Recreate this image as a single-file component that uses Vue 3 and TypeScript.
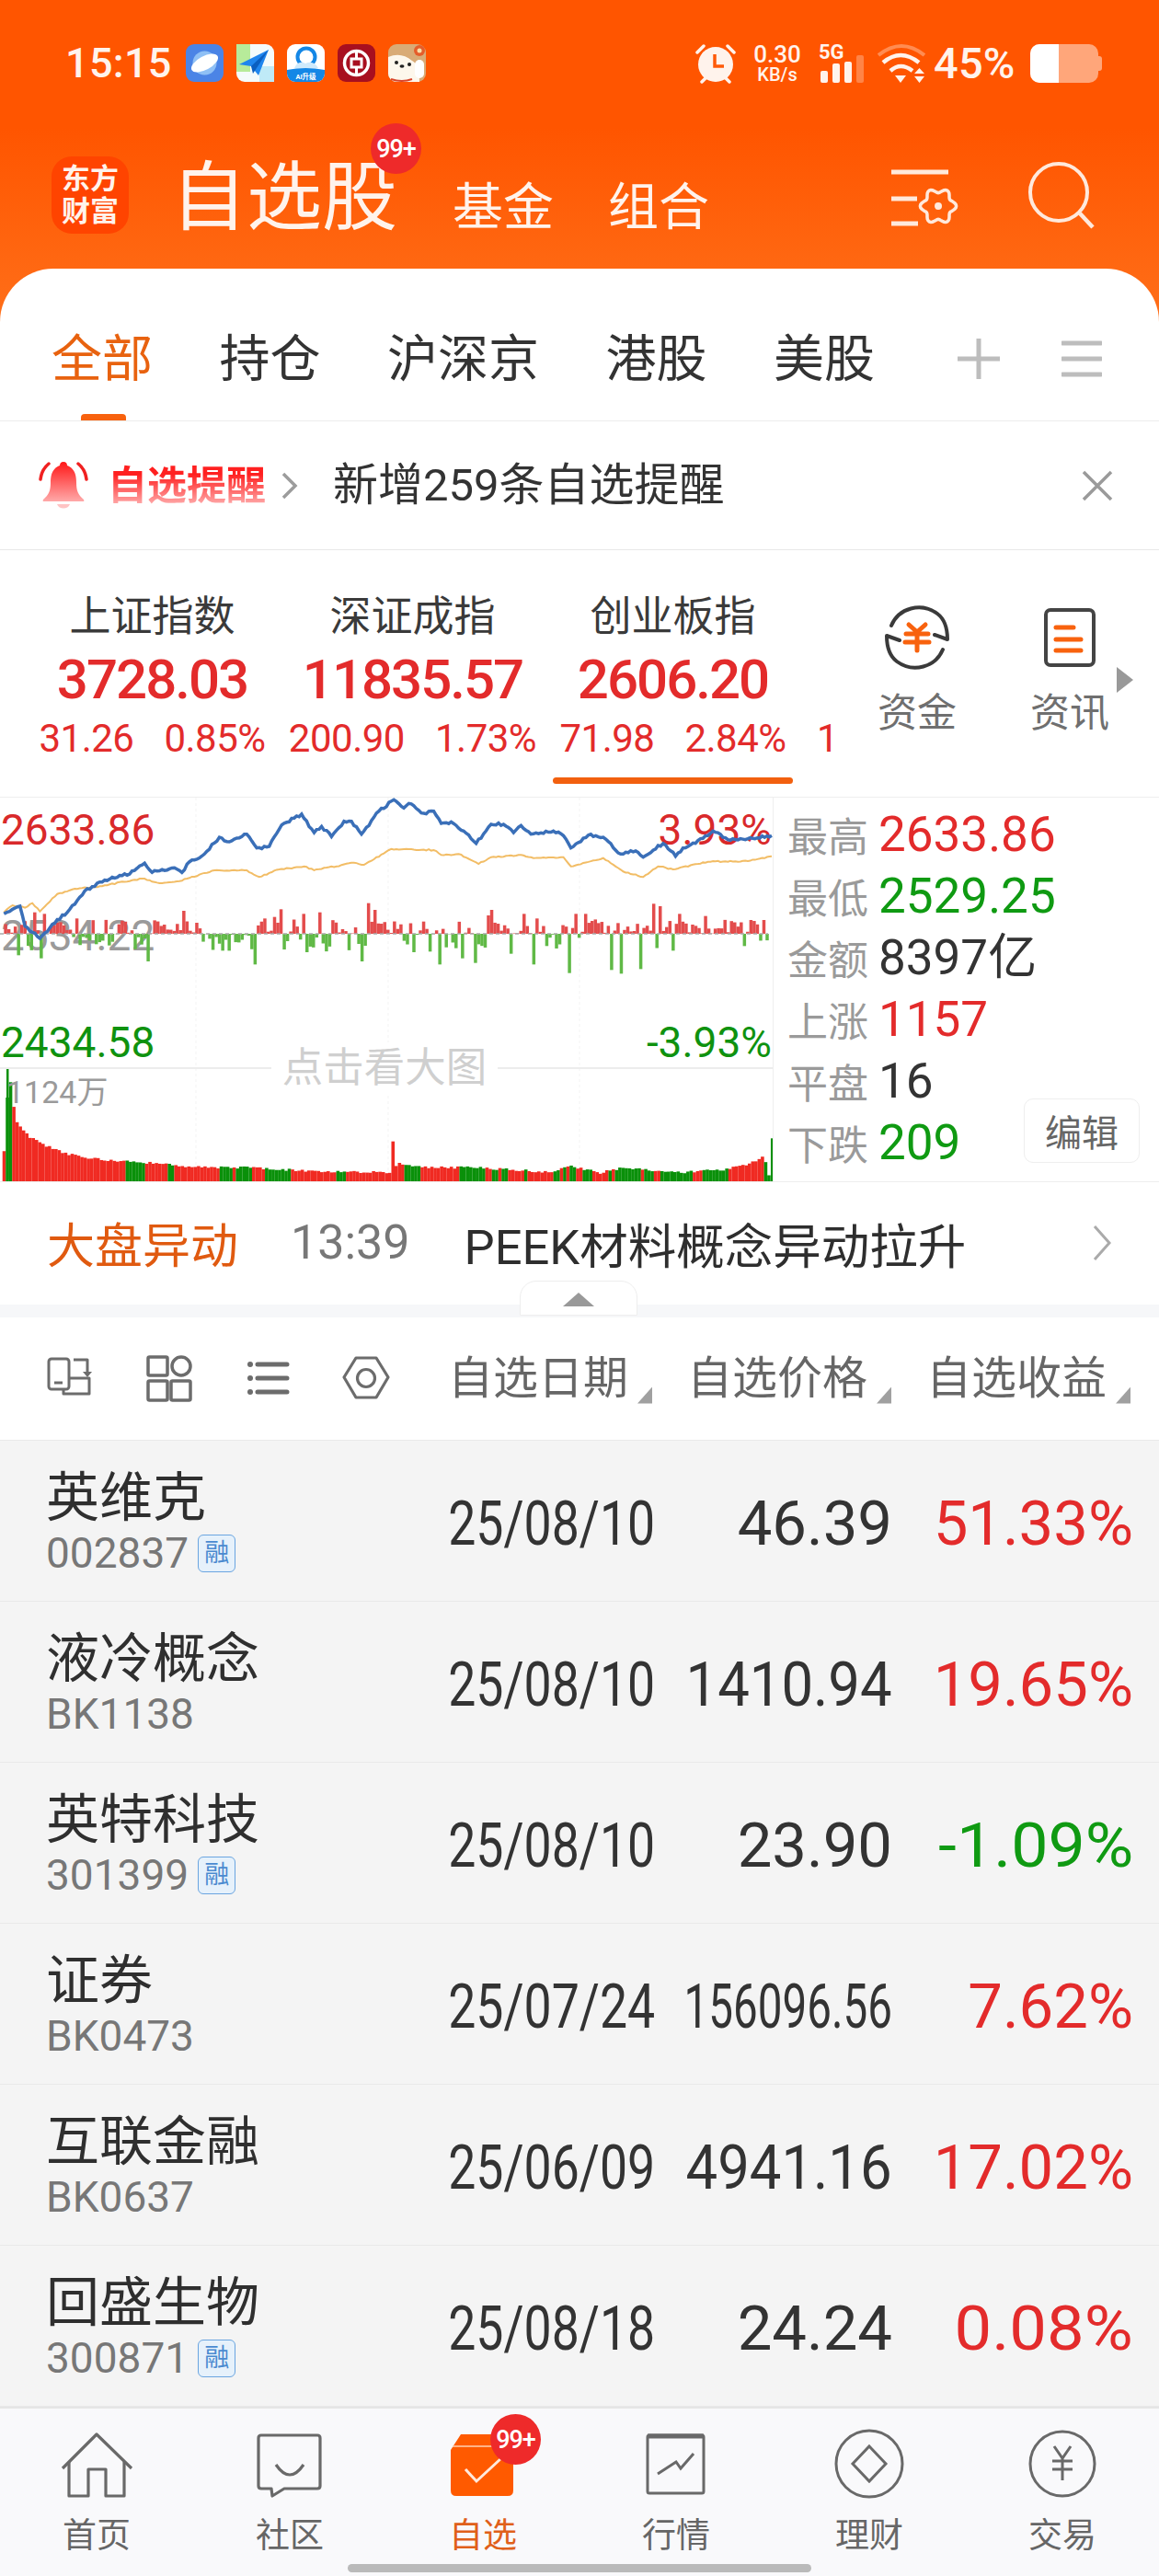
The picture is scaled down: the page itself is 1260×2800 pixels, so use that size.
<script setup lang="ts">
const tabs = ['全部', '持仓', '沪深京', '港股', '美股']

const indices = [
  { name: '上证指数', value: '3728.03', diff: '31.26', pct: '0.85%', active: false },
  { name: '深证成指', value: '11835.57', diff: '200.90', pct: '1.73%', active: false },
  { name: '创业板指', value: '2606.20', diff: '71.98', pct: '2.84%', active: true },
]

const stats = [
  { label: '最高', value: '2633.86', tone: 'up' },
  { label: '最低', value: '2529.25', tone: 'down' },
  { label: '金额', value: '8397亿', tone: '' },
  { label: '上涨', value: '1157', tone: 'up' },
  { label: '平盘', value: '16', tone: '' },
  { label: '下跌', value: '209', tone: 'down' },
]

const stocks = [
  { name: '英维克', code: '002837', margin: true, date: '25/08/10', price: '46.39', priceFit: 1, gain: '51.33%', tone: 'up', gainFit: 1 },
  { name: '液冷概念', code: 'BK1138', margin: false, date: '25/08/10', price: '1410.94', priceFit: 0.92, gain: '19.65%', tone: 'up', gainFit: 1 },
  { name: '英特科技', code: '301399', margin: true, date: '25/08/10', price: '23.90', priceFit: 1, gain: '-1.09%', tone: 'down', gainFit: 1.07 },
  { name: '证券', code: 'BK0473', margin: false, date: '25/07/24', price: '156096.56', priceFit: 0.71, gain: '7.62%', tone: 'up', gainFit: 1 },
  { name: '互联金融', code: 'BK0637', margin: false, date: '25/06/09', price: '4941.16', priceFit: 0.92, gain: '17.02%', tone: 'up', gainFit: 1 },
  { name: '回盛生物', code: '300871', margin: true, date: '25/08/18', price: '24.24', priceFit: 1, gain: '0.08%', tone: 'up', gainFit: 1.08 },
]

const sortHeads = ['自选日期', '自选价格', '自选收益']

const navItems = [
  { key: 'home', label: '首页' },
  { key: 'social', label: '社区' },
  { key: 'watch', label: '自选' },
  { key: 'quote', label: '行情' },
  { key: 'wealth', label: '理财' },
  { key: 'trade', label: '交易' },
]

// chart traced in reference pixels: x scaled, y thirds
const sx = (z: number) => z / 1.845
const sy = (z: number) => z / 3 - 7

let seed = 20250818
const rnd = () => {
  seed = (seed * 1664525 + 1013904223) % 4294967296
  return seed / 4294967296
}

const blueKeys = [[8,400],[25,385],[40,375],[50,440],[80,480],[110,430],[140,385],[170,325],[210,290],[260,270],[290,235],[305,265],[350,250],[365,265],[380,230],[410,205],[440,150],[460,165],[495,140],[515,185],[540,180],[565,110],[605,75],[630,135],[645,115],[665,148],[690,98],[705,98],[725,140],[760,65],[790,28],[810,55],[820,40],[850,72],[870,65],[885,105],[905,100],[930,130],[955,170],[985,108],[1010,108],[1030,135],[1045,112],[1065,140],[1110,130],[1130,145],[1145,185],[1180,143],[1210,150],[1245,205],[1275,195],[1290,215],[1330,170],[1355,212],[1370,185],[1395,170],[1430,130],[1465,160],[1500,155],[1548,145]]
const amberKeys = [[8,395],[25,372],[50,380],[65,365],[80,392],[115,335],[150,318],[200,310],[285,285],[320,300],[360,293],[430,258],[495,258],[520,280],[560,255],[610,245],[630,258],[710,233],[730,240],[785,188],[870,192],[885,208],[920,205],[960,237],[985,215],[1045,208],[1070,218],[1130,215],[1145,245],[1210,218],[1250,262],[1290,280],[1320,245],[1350,255],[1420,230],[1500,228],[1548,212]]

const tracePath = (keys: number[][], noise: number) => {
  let d = ''
  keys.forEach((p, i) => {
    if (i === 0) {
      d = `M${sx(p[0]).toFixed(1)} ${sy(p[1]).toFixed(1)}`
      return
    }
    const prev = keys[i - 1]
    const steps = Math.max(1, Math.round((p[0] - prev[0]) / 5))
    for (let s = 1; s <= steps; s++) {
      const t = s / steps
      const y = prev[1] + (p[1] - prev[1]) * t + (s < steps ? (rnd() - 0.5) * noise : 0)
      d += `L${sx(prev[0] + (p[0] - prev[0]) * t).toFixed(1)} ${sy(y).toFixed(1)}`
    }
  })
  return d
}
const bluePath = tracePath(blueKeys, 9)
const amberPath = tracePath(amberKeys, 4)

const redPeaks: Record<number, number> = { 368: 75, 735: 100, 746: 78, 560: 80, 605: 65, 640: 70, 975: 60, 985: 78, 1045: 65, 1150: 65, 1172: 65, 1305: 98, 1318: 90, 1362: 65, 1410: 58, 1500: 45, 1530: 45, 65: 70, 85: 65, 150: 50, 525: 50, 548: 55, 1075: 50, 1235: 35 }
const greenPeaks: Record<number, number> = { 297: 90, 445: 55, 510: 100, 720: 90, 830: 60, 880: 100, 925: 80, 950: 95, 1068: 100, 1138: 128, 1222: 118, 1243: 130, 1280: 115, 1020: 65, 615: 60, 1350: 55, 1490: 40, 80: 80, 35: 70 }

const flowBars: { x: number; y: number; h: number; up: boolean }[] = []
let flowUp = true
for (let z = 8; z < 1540; z += 6.5) {
  const near = (peaks: Record<number, number>) => Object.keys(peaks).find((k) => Math.abs(Number(k) - z) < 3.3)
  const r = near(redPeaks)
  const g = near(greenPeaks)
  if (rnd() > 0.65) flowUp = rnd() > 0.45
  let up = flowUp
  let h = up ? 8 + rnd() * 40 : 10 + rnd() * 48
  if (rnd() > 0.8) h = rnd() * 8
  if (r) { up = true; h = redPeaks[Number(r)] }
  else if (g) { up = false; h = greenPeaks[Number(g)] }
  flowBars.push({ x: sx(z), y: up ? sy(465 - h) : sy(465), h: h / 3, up })
}

const volumeEnv = [[5,95],[15,365],[22,260],[30,195],[40,170],[60,140],[90,115],[130,90],[200,70],[300,60],[400,45],[500,45],[600,35],[700,30],[780,30],[795,60],[850,45],[950,45],[1100,30],[1140,50],[1200,28],[1250,45],[1350,28],[1450,38],[1500,55],[1530,85],[1540,8]]
const volumeBars: { x: number; y: number; h: number; up: boolean }[] = []
let runUp = true
for (let z = 5; z < 1541; z += 6.5) {
  const next = volumeEnv.findIndex((p) => p[0] >= z)
  const b = volumeEnv[Math.max(next, 1)]
  const a = volumeEnv[Math.max(next, 1) - 1]
  let h = a[1] + ((b[1] - a[1]) * (z - a[0])) / (b[0] - a[0]) + (rnd() - 0.5) * 8
  if (rnd() > 0.6) runUp = rnd() < (z < 440 ? 0.72 : 0.5)
  let up = runUp
  if (z > 10 && z < 20) up = false
  if (Math.abs(z - 785) < 3.3) { h = 130; up = true }
  volumeBars.push({ x: sx(z), y: sy(1272 - h), h: h / 3, up })
}
volumeBars.push({ x: sx(1546), y: sy(1132), h: 140 / 3, up: false })

// six lobed gear outline for the settings icon
const gearPath = Array.from({ length: 73 }, (_, i) => {
  const a = (i / 72) * Math.PI * 2
  const r = 17 + 2.6 * Math.cos(a * 6)
  return `${i === 0 ? 'M' : 'L'}${(26 + r * Math.cos(a)).toFixed(1)} ${(26 + r * Math.sin(a)).toFixed(1)}`
}).join('') + 'Z'
</script>

<template>
  <div class="page">
    <header class="top">
      <div class="status">
        <span class="clock">15:15</span>
        <div class="notif">
          <svg viewBox="0 0 41 41">
            <rect width="41" height="41" rx="9" fill="#4b84e6" />
            <circle cx="20.5" cy="20.5" r="13" fill="#8fc0f5" />
            <ellipse cx="20.5" cy="20.5" rx="16" ry="7.5" fill="#fff" transform="rotate(-28 20.5 20.5)" />
          </svg>
          <svg viewBox="0 0 41 41">
            <rect width="41" height="41" rx="9" fill="#f4fbfb" />
            <rect width="15" height="30" x="0" fill="#b7eb9a" />
            <rect x="25" y="24" width="16" height="17" fill="#bfeaf7" />
            <path d="M3 22 35 6 24 34 16 24Z" fill="#1f86ee" />
            <path d="M16 24 35 6 18 32Z" fill="#0b5fc0" />
          </svg>
          <svg viewBox="0 0 41 41">
            <rect width="41" height="41" rx="9" fill="#fff" />
            <path d="M0 28 Q20 24 41 28 V32 A9 9 0 0 1 32 41 H9 A9 9 0 0 1 0 32Z" fill="#1487e6" />
            <circle cx="21" cy="14" r="9.5" fill="none" stroke="#1487e6" stroke-width="4" />
            <path d="M8 26 Q12 17 20 21 Q29 17 34 26Z" fill="#cfeafc" />
            <text x="20.5" y="37.5" text-anchor="middle" class="ai-text">AI升级</text>
          </svg>
          <svg viewBox="0 0 41 41">
            <rect width="41" height="41" rx="9" fill="#a80f1f" />
            <circle cx="20.5" cy="20.5" r="13" fill="none" stroke="#fff" stroke-width="3.5" />
            <rect x="15" y="16" width="11" height="9" fill="none" stroke="#fff" stroke-width="3" />
            <path d="M20.5 7V16M20.5 25V34" stroke="#fff" stroke-width="3" />
          </svg>
          <svg viewBox="0 0 41 41">
            <rect width="41" height="41" rx="9" fill="#d9ab76" />
            <path d="M0 14 Q14 8 26 18 Q34 22 34 41 H9 A9 9 0 0 1 0 32Z" fill="#fdf7ec" />
            <rect x="29" y="17" width="10" height="20" rx="5" fill="#fff" />
            <circle cx="34" cy="7" r="6" fill="#e55d2b" />
            <circle cx="34" cy="7" r="2.5" fill="#f8dfa8" />
            <circle cx="9" cy="20" r="2" fill="#222" />
            <circle cx="23" cy="22" r="2" fill="#222" />
            <ellipse cx="15" cy="24" rx="2.5" ry="1.8" fill="#222" />
            <path d="M3 38 Q15 42 26 38" stroke="#d9452b" stroke-width="2" fill="none" />
          </svg>
        </div>
        <div class="sys">
          <svg class="alarm" viewBox="0 0 44 44">
            <circle cx="22" cy="23" r="19" fill="#fff3ec" />
            <path d="M2 10 9 3M42 10 35 3M7 42 11 38M37 42 33 38" stroke="#fff3ec" stroke-width="3.5" stroke-linecap="round" />
            <path d="M21 12V25H31" fill="none" stroke="#ff5a08" stroke-width="3.5" />
          </svg>
          <div class="speed"><span>0.30</span><small>KB/s</small></div>
          <div class="signal">
            <span class="net">5G</span>
            <svg viewBox="0 0 50 30">
              <rect x="2" y="17" width="8" height="13" rx="2" fill="#fff3ec" />
              <rect x="15" y="9" width="8" height="21" rx="2" fill="#fff3ec" />
              <rect x="28" y="7" width="8" height="23" rx="2" fill="#fff3ec" />
              <rect x="41" y="0" width="8" height="30" rx="2" fill="#fff3ec" opacity=".3" />
            </svg>
          </div>
          <svg class="wifi" viewBox="0 0 52 43">
            <path d="M1 13 Q26 -7 51 13" fill="none" stroke="#fff3ec" stroke-width="4" opacity=".35" />
            <path d="M6 21 Q25 5 45 21" fill="none" stroke="#fff3ec" stroke-width="4.5" />
            <path d="M14 30 Q25 20 38 30" fill="none" stroke="#fff3ec" stroke-width="4.5" />
            <path d="M19 35H31L25 43ZM40 33H51L45.500 27ZM40 36H51L45.500 43Z" fill="#fff3ec" />
          </svg>
          <span class="battery-pct">45%</span>
          <div class="battery"><i class="battery-fill"></i></div>
        </div>
      </div>

      <div class="title-row">
        <div class="logo"><span>东方</span><span>财富</span></div>
        <div class="title-main">自选股<b class="badge title-badge">99+</b></div>
        <div class="title-sub">基金</div>
        <div class="title-sub">组合</div>
        <svg class="tool-gear" viewBox="0 0 75 70">
          <path d="M1 5H63M1 34H29M1 61H30" stroke="#ffe9dc" stroke-width="5" fill="none" />
          <path :d="gearPath" transform="translate(0 16) translate(26 0)" fill="none" stroke="#ffe9dc" stroke-width="3.500" />
          <circle cx="52" cy="42" r="4" fill="#ffe9dc" />
        </svg>
        <svg class="tool-search" viewBox="0 0 76 76">
          <circle cx="35" cy="35" r="31" fill="none" stroke="#ffe9dc" stroke-width="4" />
          <path d="M58 58 72 73" stroke="#ffe9dc" stroke-width="4.500" />
        </svg>
      </div>
    </header>

    <main class="sheet">
      <nav class="tabs">
        <span v-for="(tab, i) in tabs" :key="tab" class="tab" :class="{ on: i === 0 }">{{ tab }}</span>
        <svg class="tab-plus" viewBox="0 0 46 44"><path d="M23 0V44M0 22H46" stroke="#bdbdbd" stroke-width="5" /></svg>
        <svg class="tab-menu" viewBox="0 0 44 40"><path d="M1 3H43M1 20H43M1 37H43" stroke="#bdbdbd" stroke-width="5" stroke-linecap="round" /></svg>
      </nav>

      <section class="reminder">
        <svg class="bell" viewBox="0 0 56 54">
          <defs>
            <linearGradient id="bellFill" x1="0" y1="0" x2="0" y2="1">
              <stop offset="0" stop-color="#ff1717" />
              <stop offset="1" stop-color="#ffa9a9" />
            </linearGradient>
          </defs>
          <path d="M28 1C31 1 32 3 32 5 40 8 42 15 42 24 42 32 44 37 50 42 51 44 50 44 48 44H8C6 44 5 44 6 42 12 37 14 32 14 24 14 15 16 8 24 5 24 3 25 1 28 1Z" fill="url(#bellFill)" />
          <path d="M21 47H35C33 53 23 53 21 47Z" fill="#ffc4c4" />
          <path d="M3 20C4 12 7 7 12 3M53 20C52 12 49 7 44 3" fill="none" stroke="#f02020" stroke-width="3.500" stroke-linecap="round" />
        </svg>
        <span class="reminder-tag">自选提醒</span>
        <svg class="reminder-arrow" viewBox="0 0 18 30"><path d="M2 2 15 15 2 28" fill="none" stroke="#9c9c9c" stroke-width="3.500" /></svg>
        <span class="reminder-text">新增259条自选提醒</span>
        <svg class="reminder-close" viewBox="0 0 34 34"><path d="M2 2 32 32M32 2 2 32" stroke="#9a9a9a" stroke-width="3.500" /></svg>
      </section>

      <section class="market">
        <div v-for="idx in indices" :key="idx.name" class="index-col">
          <div class="index-name">{{ idx.name }}</div>
          <div class="index-value">{{ idx.value }}</div>
          <div class="index-sub"><span>{{ idx.diff }}</span><span>{{ idx.pct }}</span></div>
          <i class="index-bar" :class="{ on: idx.active }"></i>
        </div>
        <div class="index-clip">1</div>
        <div class="quick">
          <svg viewBox="0 0 80 80">
            <path d="M12 27C20 8 44 1 62 14 70 20 73 30 73 42L59 37M68 53C60 72 36 79 18 66 10 60 7 50 7 38L21 43" fill="none" stroke="#3a3a3a" stroke-width="4" stroke-linecap="round" stroke-linejoin="round" />
            <path d="M31 26 40 34 49 26M28 36H52M27 45H53M40 34V54" fill="none" stroke="#f8620e" stroke-width="5" stroke-linecap="round" />
          </svg>
          <span>资金</span>
        </div>
        <div class="quick">
          <svg viewBox="0 0 80 80">
            <rect x="14" y="10" width="52" height="60" rx="5" fill="none" stroke="#444" stroke-width="4" />
            <path d="M25 29H44M25 42H52M25 54H52" stroke="#f8620e" stroke-width="5" stroke-linecap="round" />
          </svg>
          <span>资讯</span>
        </div>
        <i class="more-tri"></i>
      </section>

      <section class="board">
        <div class="chart">
          <div class="c-label c-high">2633.86</div>
          <div class="c-label c-high-pct">3.93%</div>
          <div class="c-label c-mid">2534.22</div>
          <div class="c-label c-low">2434.58</div>
          <div class="c-label c-low-pct">-3.93%</div>
          <svg class="chart-svg" viewBox="0 0 840 417" width="840" height="417">
            <path d="M213 0V417M422 0V417M630 0V417" stroke="#f3f3f3" stroke-dasharray="3 3" />
            <path d="M0 294H840" stroke="#ececec" stroke-width="2" />
            <rect v-for="(b, i) in flowBars" :key="'f' + i" :x="b.x" :y="b.y" width="3.500" :height="b.h" :fill="b.up ? '#e34c4c' : '#60b946'" />
            <path d="M0 148H835" stroke="#a9a9a9" stroke-width="1.500" stroke-dasharray="4 3" />
            <path :d="amberPath" fill="none" stroke="#f2bd66" stroke-width="2" />
            <path :d="bluePath" fill="none" stroke="#3a6fb8" stroke-width="3.500" />
            <rect v-for="(b, i) in volumeBars" :key="'v' + i" :x="b.x" :y="b.y" width="3.600" :height="b.h" :fill="b.up ? '#f02a22' : '#0a900a'" />
            <rect x="7" y="295" width="2.500" height="120" fill="#0a900a" />
          </svg>
          <div class="c-hint">点击看大图</div>
          <div class="c-vol">1124万</div>
        </div>
        <div class="stats">
          <div v-for="s in stats" :key="s.label" class="stat">
            <span class="stat-label">{{ s.label }}</span>
            <span class="stat-value" :class="s.tone">{{ s.value }}</span>
          </div>
          <button class="edit" type="button">编辑</button>
        </div>
      </section>

      <section class="ticker">
        <span class="ticker-tag">大盘异动</span>
        <span class="ticker-time">13:39</span>
        <span class="ticker-text">PEEK材料概念异动拉升</span>
        <svg class="ticker-arrow" viewBox="0 0 22 38"><path d="M3 1 19 19 3 37" fill="none" stroke="#aaa" stroke-width="3" /></svg>
      </section>
      <div class="band">
        <div class="collapse"><i></i></div>
      </div>

      <section class="list-head">
        <svg viewBox="0 0 54 54">
          <g fill="none" stroke="#6c6c6c" stroke-width="3" stroke-linejoin="round">
            <rect x="3" y="5" width="22" height="33" rx="3" />
            <path d="M25 26H47V43H19V38M30 6H45V20" />
            <path d="M9 31H18" />
          </g>
          <path d="M40 19H50L45 25Z" fill="#6c6c6c" />
        </svg>
        <svg viewBox="0 0 54 54">
          <g fill="none" stroke="#6c6c6c" stroke-width="3.500">
            <rect x="3" y="3" width="21" height="20" rx="1.500" />
            <circle cx="39" cy="13" r="10" />
            <rect x="3" y="29" width="21" height="21" rx="1.500" />
            <rect x="28" y="29" width="21" height="21" rx="1.500" />
          </g>
        </svg>
        <svg viewBox="0 0 54 54">
          <g fill="#6c6c6c">
            <circle cx="6" cy="11" r="3" /><circle cx="6" cy="26" r="3" /><circle cx="6" cy="41" r="3" />
          </g>
          <path d="M14 11H46M14 26H46M14 41H46" stroke="#6c6c6c" stroke-width="5" stroke-linecap="round" />
        </svg>
        <svg class="nut" viewBox="0 0 54 54">
          <path d="M3 25 16 4H38L51 25 38 47H16Z" fill="none" stroke="#6c6c6c" stroke-width="3.200" stroke-linejoin="round" />
          <circle cx="27" cy="26" r="9.500" fill="none" stroke="#6c6c6c" stroke-width="3.200" />
        </svg>
        <div class="sorts">
          <div v-for="head in sortHeads" :key="head" class="sort">{{ head }}<i></i></div>
        </div>
      </section>

      <section class="rows">
        <div v-for="row in stocks" :key="row.code" class="row">
          <div class="row-name">
            <div class="name">{{ row.name }}</div>
            <div class="code">{{ row.code }}<em v-if="row.margin">融</em></div>
          </div>
          <div class="cell"><span class="date">{{ row.date }}</span></div>
          <div class="cell"><span class="num" :style="{ transform: `scaleX(${row.priceFit})` }">{{ row.price }}</span></div>
          <div class="cell"><span class="num" :class="row.tone" :style="{ transform: `scaleX(${row.gainFit})` }">{{ row.gain }}</span></div>
        </div>
      </section>
    </main>

    <footer class="tabbar">
      <div v-for="item in navItems" :key="item.key" class="nav-item" :class="{ on: item.key === 'watch' }">
        <svg viewBox="0 0 80 80">
          <g v-if="item.key === 'home'" fill="none" stroke="#696969" stroke-width="3.200" stroke-linejoin="round">
            <path d="M3 44 40 7 78 44" />
            <path d="M10 37V74H31V45H50V74H70V37" />
          </g>
          <g v-else-if="item.key === 'social'" fill="none" stroke="#696969" stroke-width="3.200" stroke-linejoin="round">
            <path d="M9 8H70Q73 8 73 11V63Q73 66 70 66H34L21 74 20 66H9Q6 66 6 63V11Q6 8 9 8Z" />
            <path d="M25 40Q40 62 55 40" />
          </g>
          <g v-else-if="item.key === 'watch'">
            <path d="M5 24 16 7H62V18H67Q73 18 73 24V68Q73 74 67 74H11Q5 74 5 68Z" fill="#ff5a00" />
            <path d="M7 20H60" stroke="#ffd2b5" stroke-width="1.500" />
            <path d="M21 45 33 58 60 33" fill="none" stroke="#ffe9dc" stroke-width="3" />
          </g>
          <g v-else-if="item.key === 'quote'" fill="none" stroke="#696969" stroke-width="3">
            <rect x="9" y="8" width="61" height="63" rx="2" />
            <path d="M9 9H70" stroke-width="5" />
            <path d="M20 50 40 37 45 44 59 28" />
          </g>
          <g v-else-if="item.key === 'wealth'" fill="none" stroke="#696969" stroke-width="3">
            <circle cx="40" cy="39" r="36" />
            <path d="M40 20 58 39 40 58 22 39Z" />
          </g>
          <g v-else fill="none" stroke="#696969" stroke-width="3">
            <circle cx="40" cy="39" r="35" />
            <path d="M31 20 40 33 49 20M29 36H51M29 45H51M40 33V57" />
          </g>
        </svg>
        <span>{{ item.label }}</span>
        <b v-if="item.key === 'watch'" class="badge nav-badge">99+</b>
      </div>
      <i class="home-bar"></i>
    </footer>
  </div>
</template>

<style scoped>
.page {
  width: 1260px;
  height: 2800px;
  overflow: hidden;
  display: flex;
  flex-direction: column;
  font-family: Roboto, "Noto Sans CJK SC", sans-serif;
  color: #333;
  background: linear-gradient(#ff5500 0, #ff5500 140px, #ff6f19 350px, #ffffff 350px) no-repeat;
}
i, em, b { font-style: normal; }

.top { height: 292px; flex: none; color: #fff3ec; }
.status { display: flex; align-items: center; height: 43px; padding: 47px 66px 0 71px; }
.clock { font-size: 45px; font-weight: 500; letter-spacing: .3px; line-height: 43px; width: 131px; }
.notif { display: flex; gap: 14px; }
.notif svg { width: 41px; height: 41px; display: block; }
.ai-text { font: 700 7.500px Roboto, "Noto Sans CJK SC", sans-serif; fill: #fff; }
.sys { display: flex; align-items: center; margin-left: auto; }
.alarm { width: 44px; height: 44px; }
.speed { display: flex; flex-direction: column; align-items: center; width: 54px; margin-left: 18px; font-weight: 500; }
.speed span { font-size: 26px; line-height: 26px; }
.speed small { font-size: 20px; line-height: 19px; }
.signal { position: relative; width: 50px; height: 43px; margin-left: 18px; }
.signal svg { position: absolute; left: 0; bottom: 0; width: 50px; height: 30px; display: block; }
.net { position: absolute; left: 0; top: -1px; font-size: 22px; font-weight: 700; line-height: 22px; color: #fff3ec; }
.wifi { width: 52px; height: 43px; margin-left: 14px; }
.battery-pct { font-size: 47px; font-weight: 500; margin-left: 9px; width: 105px; letter-spacing: .2px; line-height: 43px; }
.battery { position: relative; width: 74px; height: 42px; border-radius: 10px; background: rgba(255, 255, 255, .48); overflow: visible; }
.battery::after { content: ""; position: absolute; right: -4px; top: 13px; width: 4px; height: 16px; border-radius: 0 3px 3px 0; background: rgba(255, 255, 255, .48); }
.battery-fill { display: block; width: 31px; height: 42px; background: #fff; border-radius: 10px 0 0 10px; }

.title-row { display: flex; align-items: center; height: 84px; padding: 80px 68px 0 56px; }
.logo { width: 84px; height: 84px; flex: none; border-radius: 22px; background: #ff4400; display: flex; flex-direction: column; align-items: center; justify-content: center; font-size: 31px; font-weight: 700; line-height: 35px; }
.title-main { position: relative; font-size: 82px; line-height: 84px; margin: 6px 0 0 46px; width: 306px; }
.badge { display: flex; align-items: center; justify-content: center; position: absolute; border-radius: 50%; background: #ee2a2a; color: #fff; font-weight: 500; font-size: 27px; letter-spacing: -1px; width: 55px; height: 55px; }
.title-badge { left: 217px; top: -39px; }
.title-sub { font-size: 55px; line-height: 60px; margin-top: 26px; width: 169px; }
.title-sub + .title-sub { width: 110px; }
.tool-gear { width: 75px; height: 70px; margin-left: auto; margin-top: 9px; }
.tool-search { width: 76px; height: 76px; margin-left: 73px; margin-top: -1px; flex: none; }

.sheet { flex: none; height: 2324px; background: #fff; border-radius: 58px 58px 0 0; display: flex; flex-direction: column; }
.tabs { display: flex; align-items: center; height: 166px; padding: 30px 62px 0 56px; gap: 72.500px; border-bottom: 1px solid #ececec; box-sizing: border-box; flex: none; }
.tab { position: relative; font-size: 55px; line-height: 70px; }
.tab.on { color: #e8620f; }
.tab.on::after { content: ""; position: absolute; left: 32px; right: 29px; top: 95px; height: 7px; border-radius: 4px 4px 0 0; background: #f8620e; }
.tab-plus { width: 46px; height: 44px; margin-left: auto; }
.tab-menu { width: 44px; height: 40px; margin-left: -5.500px; }

.reminder { display: flex; align-items: center; height: 140px; flex: none; box-sizing: border-box; padding: 0 50px 0 41px; border-bottom: 1px solid #e8e8e8; }
.bell { width: 56px; height: 54px; flex: none; }
.reminder-tag { margin-left: 20px; font-size: 43px; font-weight: 700; line-height: 50px; background: linear-gradient(#ff2020 25%, #ffa8a8 90%); -webkit-background-clip: text; background-clip: text; color: transparent; }
.reminder-arrow { width: 18px; height: 30px; margin-left: 17px; flex: none; }
.reminder-text { font-size: 49px; margin-left: 38px; line-height: 60px; }
.reminder-close { width: 34px; height: 34px; margin-left: auto; }

.market { position: relative; display: flex; height: 268px; flex: none; box-sizing: border-box; padding: 45px 0 0 24px; }
.index-col { width: 283px; flex: none; display: flex; flex-direction: column; align-items: center; }
.index-name { font-size: 45px; line-height: 56px; color: #3a3a3a; }
.index-value { font-size: 60px; font-weight: 500; line-height: 70px; letter-spacing: -2px; margin-top: 5px; color: #e32b2b; }
.index-sub { display: flex; gap: 33px; font-size: 42px; line-height: 50px; letter-spacing: -.5px; margin-top: 4px; color: #e32b2b; white-space: nowrap; }
.index-bar { display: block; width: 261px; height: 7px; margin-top: 17px; border-radius: 4px; }
.index-bar.on { background: #f2600f; }
.index-clip { width: 40px; flex: none; margin: 135px 0 0 0; padding-left: 15px; box-sizing: border-box; font-size: 42px; line-height: 50px; color: #e32b2b; }
.quick { width: 170px; flex: none; display: flex; flex-direction: column; align-items: center; margin-top: 10px; margin-left: -1px; font-size: 43px; color: #6f6f6f; }
.quick svg { width: 80px; height: 80px; }
.quick span { line-height: 54px; margin-top: 15px; }
.quick + .quick { margin-left: -4px; }
.more-tri { position: absolute; left: 1214px; top: 127px; width: 18px; height: 28px; background: #999; clip-path: polygon(0 0, 100% 50%, 0 100%); }

.board { display: flex; height: 419px; flex: none; box-sizing: border-box; border-top: 1px solid #eee; border-bottom: 1px solid #eee; }
.chart { position: relative; width: 841px; flex: none; border-right: 1px solid #eee; box-sizing: border-box; overflow: hidden; }
.chart-svg { position: absolute; left: 0; top: 0; display: block; }
.c-label { position: absolute; font-size: 46px; line-height: 50px; }
.c-high { left: 1px; top: 10px; color: #d9292b; }
.c-high-pct { right: 1px; top: 10px; color: #d9292b; }
.c-mid { left: 1px; top: 125px; color: #9a9a9a; }
.c-low { left: 1px; top: 241px; color: #0f920f; }
.c-low-pct { right: 1px; top: 241px; color: #0f920f; }
.c-hint { position: absolute; left: 295px; top: 266px; width: 246px; text-align: center; background: #fff; font-size: 44.500px; line-height: 56px; color: #cfcfcf; }
.c-vol { position: absolute; left: 7px; top: 298px; font-size: 34px; line-height: 44px; color: #9a9a9a; }

.stats { position: relative; flex: 1; padding: 6px 0 0 15px; }
.stat { display: flex; align-items: center; height: 67px; }
.stat-label { font-size: 44px; color: #9a9a9a; width: 99px; flex: none; }
.stat-value { font-size: 53px; line-height: 60px; color: #333; }
.up { color: #e32b2b; }
.down { color: #0f9a12; }
.edit { position: absolute; left: 272px; top: 327px; width: 126px; height: 70px; border: 1.500px solid #eee; border-radius: 10px; background: #fff; color: #666; font: 400 40px Roboto, "Noto Sans CJK SC", sans-serif; padding: 0; }

.ticker { display: flex; align-items: center; height: 133px; flex: none; box-sizing: border-box; padding: 0 52px 2px 51px; font-size: 52px; }
.ticker-tag { color: #e05a10; }
.ticker-time { color: #777; margin-left: 57px; font-size: 52px; }
.ticker-text { margin-left: 59px; font-size: 52.500px; color: #2e2e2e; }
.ticker-arrow { width: 22px; height: 38px; margin-left: auto; margin-right: -1px; }
.band { position: relative; height: 14px; flex: none; background: #f6f7f9; }
.collapse { position: absolute; left: 565px; top: -26px; width: 128px; height: 38px; box-sizing: border-box; background: #fff; border: 1.500px solid #eee; border-bottom-width: 1px; border-radius: 18px 18px 0 0; }
.collapse i { display: block; width: 34px; height: 15px; margin: 12px auto 0; background: #999; clip-path: polygon(50% 0, 100% 100%, 0 100%); }

.list-head { display: flex; align-items: center; height: 134px; flex: none; box-sizing: border-box; padding-left: 50px; gap: 54px; border-bottom: 1px solid #e9e9e9; }
.list-head > svg { width: 54px; height: 54px; flex: none; }
.list-head > .nut { margin-left: -3px; }
.sorts { display: flex; gap: 38px; margin-left: 8px; }
.sort { display: flex; align-items: flex-end; font-size: 49px; line-height: 60px; color: #666; }
.sort i { display: block; width: 16px; height: 18px; margin: 0 0 3px 10px; background: #a0a0a0; clip-path: polygon(100% 0, 100% 100%, 0 100%); }

.rows { flex: none; }
.row { display: grid; grid-template-columns: 390px 272px 258px 262px; height: 175px; box-sizing: border-box; padding: 0 28px 0 50px; background: #f4f4f4; border-bottom: 1px solid #e9e9e9; }
.row-name { padding-top: 24px; }
.name { font-size: 58px; line-height: 76px; color: #2f2f2f; }
.code { display: flex; align-items: center; font-size: 46px; line-height: 50px; margin-top: -3px; color: #777; }
.code em { display: flex; align-items: center; justify-content: center; width: 41px; height: 41px; box-sizing: border-box; margin-left: 10px; border: 1.500px solid #6aa5e0; border-radius: 6px; background: #e6f1fb; color: #4a8ad0; font-size: 27px; }
.cell { display: flex; align-items: center; justify-content: flex-end; padding-top: 5px; }
.date, .num { display: inline-block; font-size: 67px; line-height: 80px; color: #333; transform-origin: right center; white-space: nowrap; }
.date { transform: scaleX(.8); }
.num.up { color: #e32b2b; }
.num.down { color: #0f9a12; }

.tabbar { position: relative; flex: 1; display: flex; background: #f9f9fb; border-top: 2px solid #e5e5e5; box-sizing: border-box; padding-top: 21px; }
.nav-item { position: relative; width: 210px; display: flex; flex-direction: column; align-items: center; font-size: 37px; color: #666; }
.nav-item svg { width: 80px; height: 80px; display: block; }
.nav-item span { line-height: 46px; margin-top: 15px; }
.nav-item.on { color: #e0601a; }
.nav-badge { left: 113px; top: -15px; }
.home-bar { position: absolute; left: 378px; bottom: 4px; width: 504px; height: 9px; border-radius: 5px; background: #bababa; }
</style>
